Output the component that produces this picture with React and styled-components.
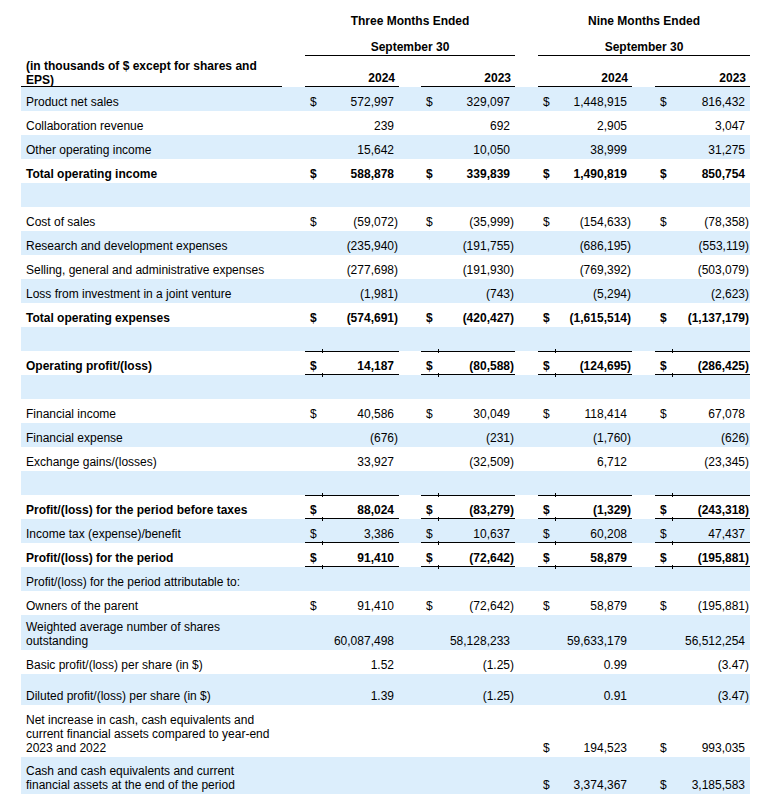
import React from "react";
import styled, { createGlobalStyle } from "styled-components";

const GlobalStyle = createGlobalStyle`
  body {
    margin: 0;
    background: #ffffff;
    font-family: "Liberation Sans", Arial, sans-serif;
    font-size: 12px;
    color: #000000;
  }
`;

const SHADE = "#dceefc";

const rows = [
  { label: "Product net sales", vals: [["$", "572,997"], ["$", "329,097"], ["$", "1,448,915"], ["$", "816,432"]] },
  { label: "Collaboration revenue", vals: [["", "239"], ["", "692"], ["", "2,905"], ["", "3,047"]] },
  { label: "Other operating income", vals: [["", "15,642"], ["", "10,050"], ["", "38,999"], ["", "31,275"]] },
  { label: "Total operating income", bold: true, vals: [["$", "588,878"], ["$", "339,839"], ["$", "1,490,819"], ["$", "850,754"]] },
  { label: "" },
  { label: "Cost of sales", vals: [["$", "(59,072)"], ["$", "(35,999)"], ["$", "(154,633)"], ["$", "(78,358)"]] },
  { label: "Research and development expenses", vals: [["", "(235,940)"], ["", "(191,755)"], ["", "(686,195)"], ["", "(553,119)"]] },
  { label: "Selling, general and administrative expenses", vals: [["", "(277,698)"], ["", "(191,930)"], ["", "(769,392)"], ["", "(503,079)"]] },
  { label: "Loss from investment in a joint venture", vals: [["", "(1,981)"], ["", "(743)"], ["", "(5,294)"], ["", "(2,623)"]] },
  { label: "Total operating expenses", bold: true, vals: [["$", "(574,691)"], ["$", "(420,427)"], ["$", "(1,615,514)"], ["$", "(1,137,179)"]] },
  { label: "" },
  { label: "Operating profit/(loss)", bold: true, line: "both", vals: [["$", "14,187"], ["$", "(80,588)"], ["$", "(124,695)"], ["$", "(286,425)"]] },
  { label: "" },
  { label: "Financial income", vals: [["$", "40,586"], ["$", "30,049"], ["$", "118,414"], ["$", "67,078"]] },
  { label: "Financial expense", vals: [["", "(676)"], ["", "(231)"], ["", "(1,760)"], ["", "(626)"]] },
  { label: "Exchange gains/(losses)", vals: [["", "33,927"], ["", "(32,509)"], ["", "6,712"], ["", "(23,345)"]] },
  { label: "" },
  { label: "Profit/(loss) for the period before taxes", bold: true, line: "both", vals: [["$", "88,024"], ["$", "(83,279)"], ["$", "(1,329)"], ["$", "(243,318)"]] },
  { label: "Income tax (expense)/benefit", line: "bottom", vals: [["$", "3,386"], ["$", "10,637"], ["$", "60,208"], ["$", "47,437"]] },
  { label: "Profit/(loss) for the period", bold: true, line: "bottom", vals: [["$", "91,410"], ["$", "(72,642)"], ["$", "58,879"], ["$", "(195,881)"]] },
  { label: "Profit/(loss) for the period attributable to:" },
  { label: "Owners of the parent", vals: [["$", "91,410"], ["$", "(72,642)"], ["$", "58,879"], ["$", "(195,881)"]] },
  { label: ["Weighted average number of shares", "outstanding"], h: 35, vals: [["", "60,087,498"], ["", "58,128,233"], ["", "59,633,179"], ["", "56,512,254"]] },
  { label: "Basic profit/(loss) per share (in $)", vals: [["", "1.52"], ["", "(1.25)"], ["", "0.99"], ["", "(3.47)"]] },
  { label: "Diluted profit/(loss) per share (in $)", h: 31, vals: [["", "1.39"], ["", "(1.25)"], ["", "0.91"], ["", "(3.47)"]] },
  { label: ["Net increase in cash, cash equivalents and", "current financial assets compared to year-end", "2023 and 2022"], h: 52, vals: [["", ""], ["", ""], ["$", "194,523"], ["$", "993,035"]] },
  { label: ["Cash and cash equivalents and current", "financial assets at the end of the period"], h: 37, vals: [["", ""], ["", ""], ["$", "3,374,367"], ["$", "3,185,583"]] },
];

const Page = styled.div`
  padding: 8px 0 0 21px;
`;

const Table = styled.table`
  width: 729px;
  table-layout: fixed;
  border-collapse: separate;
  border-spacing: 0;
  font-size: 12px;
  line-height: 14px;
`;

const Row = styled.tr`
  height: ${(p) => p.$h || 24}px;
  background: ${(p) => (p.$shade ? SHADE : "transparent")};
  font-weight: ${(p) => (p.$bold ? 700 : 400)};
`;

const lineShadow = (line) => {
  if (line === "both") return "box-shadow: inset 0 1px 0 #000, inset 0 -1px 0 #000;";
  if (line === "bottom") return "box-shadow: inset 0 -1px 0 #000;";
  return "";
};

const Cell = styled.td`
  padding: 0 0 2px 0;
  vertical-align: bottom;
  white-space: nowrap;
  ${(p) => lineShadow(p.$line)}
`;

const Label = styled(Cell)`
  padding-left: 5px;
`;

// small tick marks where the $ cell meets the amount cell on ruled rows
const Dollar = styled(Cell)`
  padding-left: 5px;
  position: relative;
  ${(p) =>
    p.$line
      ? `&::before {
    content: "";
    position: absolute;
    right: 0;
    bottom: -2px;
    width: 1px;
    height: 4px;
    background: #000;
  }`
      : ""}
  ${(p) =>
    p.$line === "both"
      ? `&::after {
    content: "";
    position: absolute;
    right: 0;
    top: -2px;
    width: 1px;
    height: 4px;
    background: #000;
  }`
      : ""}
`;

const Num = styled(Cell)`
  padding-right: 1px;
  text-align: right;
`;

const Paren = styled.span`
  visibility: hidden;
`;

const GroupTitle = styled.th`
  padding: 0 0 2px 0;
  vertical-align: bottom;
  text-align: center;
  font-weight: 700;
  ${(p) => lineShadow(p.$line)}
`;

const HeadLabel = styled.th`
  padding: 0 0 0 5px;
  vertical-align: bottom;
  text-align: left;
  font-weight: 700;
  ${(p) => lineShadow(p.$line)}
`;

const Year = styled.th`
  padding: 0 4px 2px 0;
  vertical-align: bottom;
  text-align: right;
  font-weight: 700;
  box-shadow: inset 0 -1px 0 #000;
`;

const HeadRow = styled.tr`
  height: ${(p) => p.$h}px;
`;

const widths = [261, 23, 18, 76, 22, 18, 76, 23, 18, 76, 23, 18, 77];

const Amount = ({ value }) => {
  if (!value) return null;
  if (value.endsWith(")")) return value;
  return (
    <>
      {value}
      <Paren>)</Paren>
    </>
  );
};

const LabelText = ({ label }) =>
  Array.isArray(label)
    ? label.map((l, i) => (
        <React.Fragment key={i}>
          {i > 0 && <br />}
          {l}
        </React.Fragment>
      ))
    : label;

export default function App() {
  return (
    <Page>
      <GlobalStyle />
      <Table>
        <colgroup>
          {widths.map((w, i) => (
            <col key={i} style={{ width: w }} />
          ))}
        </colgroup>
        <thead>
          <HeadRow $h={22}>
            <th />
            <th />
            <GroupTitle colSpan={5}>Three Months Ended</GroupTitle>
            <th />
            <GroupTitle colSpan={5}>Nine Months Ended</GroupTitle>
          </HeadRow>
          <HeadRow $h={26}>
            <th />
            <th />
            <GroupTitle colSpan={5} $line="bottom">September 30</GroupTitle>
            <th />
            <GroupTitle colSpan={5} $line="bottom">September 30</GroupTitle>
          </HeadRow>
          <HeadRow $h={31}>
            <HeadLabel $line="bottom">
              (in thousands of $ except for shares and
              <br />
              EPS)
            </HeadLabel>
            <th />
            <Year colSpan={2}>2024</Year>
            <th />
            <Year colSpan={2}>2023</Year>
            <th />
            <Year colSpan={2}>2024</Year>
            <th />
            <Year colSpan={2}>2023</Year>
          </HeadRow>
        </thead>
        <tbody>
          {rows.map((r, i) => (
            <Row key={i} $shade={i % 2 === 0} $bold={r.bold} $h={r.h}>
              <Label>
                <LabelText label={r.label} />
              </Label>
              {[0, 1, 2, 3].map((c) => {
                const v = r.vals ? r.vals[c] : ["", ""];
                return (
                  <React.Fragment key={c}>
                    <Cell />
                    <Dollar $line={r.line}>{v[0]}</Dollar>
                    <Num $line={r.line}>
                      <Amount value={v[1]} />
                    </Num>
                  </React.Fragment>
                );
              })}
            </Row>
          ))}
        </tbody>
      </Table>
    </Page>
  );
}
